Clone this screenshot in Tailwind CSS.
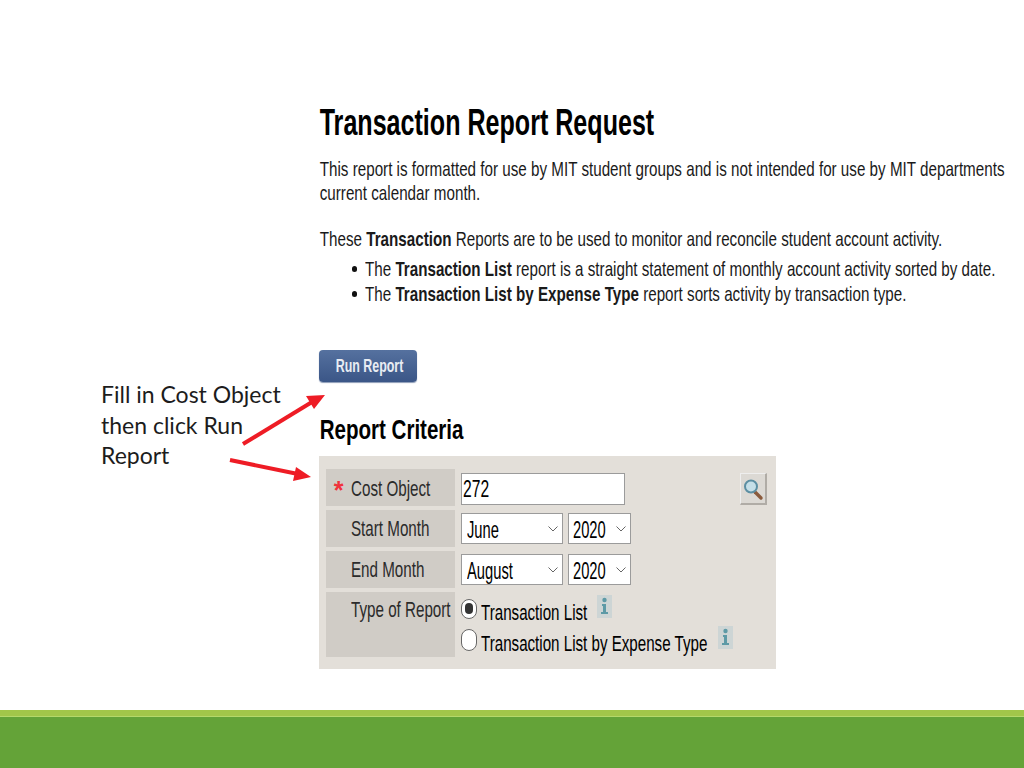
<!DOCTYPE html>
<html lang="en">
<head>
  <meta charset="UTF-8">
  <title>Transaction Report Request</title>
  <script src="https://cdn.jsdelivr.net/npm/@tailwindcss/browser@4"></script>
</head>
<body class="bg-white overflow-hidden font-['Liberation_Sans',sans-serif] text-[#1a1a1a]">
  <div class="relative w-[1024px] h-[768px] flex flex-col overflow-hidden">
    <main class="flex-1 flex min-h-0">
      <!-- Caption -->
      <div class="w-[319px] pl-[101px] pt-[379px] shrink-0">
        <p class="w-[200px] font-['Lato',sans-serif] text-[23px] leading-[30.5px] text-[#1c1c1c]">Fill in Cost Object then click Run Report</p>
      </div>

      <!-- Report screenshot -->
      <div class="flex-1 min-w-0 pt-[103px] flex flex-col items-start">
        <h1 class="h-[40px] leading-[40px] pl-px text-[37px] font-bold text-black whitespace-nowrap origin-left scale-x-[0.678]">Transaction Report Request</h1>
        <p class="mt-[14px] h-[24px] leading-[24px] pl-px text-[21px] whitespace-nowrap origin-left scale-x-[0.724]">This report is formatted for use by MIT student groups and is not intended for use by MIT departments</p>
        <p class="h-[24px] leading-[24px] pl-px text-[21px] whitespace-nowrap origin-left scale-x-[0.724]">current calendar month.</p>
        <p class="mt-[22px] h-[24px] leading-[24px] pl-px text-[21px] whitespace-nowrap origin-left scale-x-[0.724]">These <b>Transaction</b> Reports are to be used to monitor and reconcile student account activity.</p>
        <ul class="mt-[5px] pl-[33px]">
          <li class="flex items-center h-[25px] gap-[8px]">
            <span class="w-[5px] h-[6px] rounded-full bg-[#111] shrink-0"></span>
            <span class="leading-[25px] text-[21px] whitespace-nowrap origin-left scale-x-[0.723]">The <b>Transaction List</b> report is a straight statement of monthly account activity sorted by date.</span>
          </li>
          <li class="flex items-center h-[25px] gap-[8px]">
            <span class="w-[5px] h-[6px] rounded-full bg-[#111] shrink-0"></span>
            <span class="leading-[25px] text-[21px] whitespace-nowrap origin-left scale-x-[0.723]">The <b>Transaction List by Expense Type</b> report sorts activity by transaction type.</span>
          </li>
        </ul>

        <button class="mt-[44px] w-[98px] h-[32px] rounded-[4px] bg-gradient-to-b from-[#55719f] to-[#3b5687] shadow-[0_1px_1px_#8a9ab5] flex items-center justify-center">
          <span class="pl-[3px] text-[18px] font-bold text-[#e8ecf3] whitespace-nowrap scale-x-[0.69]">Run Report</span>
        </button>

        <h2 class="mt-[31px] h-[34px] leading-[34px] pl-px text-[28px] font-bold text-black whitespace-nowrap origin-left scale-x-[0.733]">Report Criteria</h2>

        <!-- Criteria panel -->
        <div class="mt-[9px] w-[457px] h-[213px] bg-[#e3dfd9] pt-[13px] pl-[7px] grid grid-cols-[129px_1fr] gap-x-[6px] grid-rows-[37px_37px_37px_65px] gap-y-[4px]">
          <div class="bg-[#d0ccc6] flex items-center text-[22px] text-[#2b2b2b]">
            <span class="w-[25px] shrink-0 text-center text-[25px] leading-none text-[#f0323c] font-bold pt-[6px]">*</span>
            <span class="shrink-0 pt-[2px] whitespace-nowrap origin-left scale-x-[0.69]">Cost Object</span>
          </div>
          <div class="flex items-start pt-[4px] pr-[9px] justify-between">
            <div class="w-[164px] h-[32px] bg-white border border-[#9b9b9b] pl-[1px] text-[23px] leading-[30px] text-black">
              <span class="inline-block origin-left scale-x-[0.68]">272</span>
            </div>
            <div class="w-[27px] h-[32px] bg-[#dcd9d4] border-r-2 border-b-2 border-[#b0aca6] border-t border-l border-t-[#eeeeee] border-l-[#eeeeee] flex items-center justify-center">
              <svg width="22" height="24" viewBox="0 0 22 24" fill="none">
                <path d="M13 15l6 6" stroke="#8a5a3c" stroke-width="3.4" stroke-linecap="round"/>
                <circle cx="9" cy="9.500" r="6" fill="#c5dfe8" stroke="#5c8fa3" stroke-width="2"/>
              </svg>
            </div>
          </div>

          <div class="bg-[#d0ccc6] flex items-center pl-[25px] text-[22px] text-[#2b2b2b]">
            <span class="whitespace-nowrap origin-left scale-x-[0.69]">Start Month</span>
          </div>
          <div class="flex items-start gap-[5px] pt-[3px]">
            <div class="w-[102px] h-[31px] bg-white border border-[#9b9b9b] pl-[5px] pr-[3px] flex items-center justify-between text-[23px] text-black">
              <span class="w-[50px] shrink-0 pt-[3px] origin-left scale-x-[0.64]">June</span>
              <svg class="shrink-0" width="12" height="8" viewBox="0 0 12 8" fill="none"><path d="M1.500 1.500l4.500 4.500 4.500-4.500" stroke="#666" stroke-width="1"/></svg>
            </div>
            <div class="w-[63px] h-[31px] bg-white border border-[#9b9b9b] pl-[4px] pr-[3px] flex items-center justify-between text-[23px] text-black">
              <span class="w-[40px] shrink-0 pt-[3px] origin-left scale-x-[0.64]">2020</span>
              <svg class="shrink-0" width="12" height="8" viewBox="0 0 12 8" fill="none"><path d="M1.500 1.500l4.500 4.500 4.500-4.500" stroke="#666" stroke-width="1"/></svg>
            </div>
          </div>

          <div class="bg-[#d0ccc6] flex items-center pl-[25px] text-[22px] text-[#2b2b2b]">
            <span class="whitespace-nowrap origin-left scale-x-[0.69]">End Month</span>
          </div>
          <div class="flex items-start gap-[5px] pt-[3px]">
            <div class="w-[102px] h-[31px] bg-white border border-[#9b9b9b] pl-[5px] pr-[3px] flex items-center justify-between text-[23px] text-black">
              <span class="w-[70px] shrink-0 pt-[3px] origin-left scale-x-[0.64]">August</span>
              <svg class="shrink-0" width="12" height="8" viewBox="0 0 12 8" fill="none"><path d="M1.500 1.500l4.500 4.500 4.500-4.500" stroke="#666" stroke-width="1"/></svg>
            </div>
            <div class="w-[63px] h-[31px] bg-white border border-[#9b9b9b] pl-[4px] pr-[3px] flex items-center justify-between text-[23px] text-black">
              <span class="w-[40px] shrink-0 pt-[3px] origin-left scale-x-[0.64]">2020</span>
              <svg class="shrink-0" width="12" height="8" viewBox="0 0 12 8" fill="none"><path d="M1.500 1.500l4.500 4.500 4.500-4.500" stroke="#666" stroke-width="1"/></svg>
            </div>
          </div>

          <div class="bg-[#d0ccc6] pl-[25px] pt-[4px] text-[22px] leading-[28px] text-[#2b2b2b]">
            <span class="block whitespace-nowrap origin-left scale-x-[0.69]">Type of Report</span>
          </div>
          <div class="flex flex-col">
            <div class="flex items-center h-[31px] pt-[2px]">
              <span class="w-[16px] h-[20px] rounded-full border border-[#666] bg-white flex items-center justify-center shrink-0"><span class="w-[8px] h-[11px] rounded-full bg-[#333]"></span></span>
              <span class="ml-[4px] w-[116px] shrink-0 pt-[7px] text-[22px] text-black whitespace-nowrap origin-left scale-x-[0.688]">Transaction List</span>
              <svg class="shrink-0 -mt-[4px]" width="15" height="23" viewBox="0 0 15 23"><rect width="15" height="23" fill="#cdd5d5"/><circle cx="7.500" cy="5" r="2.200" fill="#5d9aa6"/><path d="M5 9h4v8h2v2H4v-2h2v-6H5z" fill="#5d9aa6"/></svg>
            </div>
            <div class="flex items-center h-[31px] pt-[3px]">
              <span class="w-[16px] h-[22px] rounded-full border border-[#666] bg-white shrink-0"></span>
              <span class="ml-[4px] w-[237px] shrink-0 pt-[6px] text-[22px] text-black whitespace-nowrap origin-left scale-x-[0.688]">Transaction List by Expense Type</span>
              <svg class="shrink-0 -mt-[5px]" width="15" height="23" viewBox="0 0 15 23"><rect width="15" height="23" fill="#cdd5d5"/><circle cx="7.500" cy="5" r="2.200" fill="#5d9aa6"/><path d="M5 9h4v8h2v2H4v-2h2v-6H5z" fill="#5d9aa6"/></svg>
            </div>
          </div>
        </div>
      </div>
    </main>

    <!-- Slide footer band -->
    <footer class="h-[58px] shrink-0 flex flex-col">
      <div class="h-[6px] bg-[#a2c64a]"></div>
      <div class="h-px bg-[#b5d86a]"></div>
      <div class="flex-1 bg-[#64a338]"></div>
    </footer>

    <!-- Annotation arrows -->
    <svg class="absolute inset-0 pointer-events-none" width="1024" height="768" viewBox="0 0 1024 768" fill="none">
      <path d="M243 444L312 402" stroke="#ee1c25" stroke-width="4"/>
      <path d="M325 395L306 396L314 409Z" fill="#ee1c25"/>
      <path d="M230 460L298 474" stroke="#ee1c25" stroke-width="4"/>
      <path d="M311 477L296 467L293 481Z" fill="#ee1c25"/>
    </svg>
  </div>
</body>
</html>
